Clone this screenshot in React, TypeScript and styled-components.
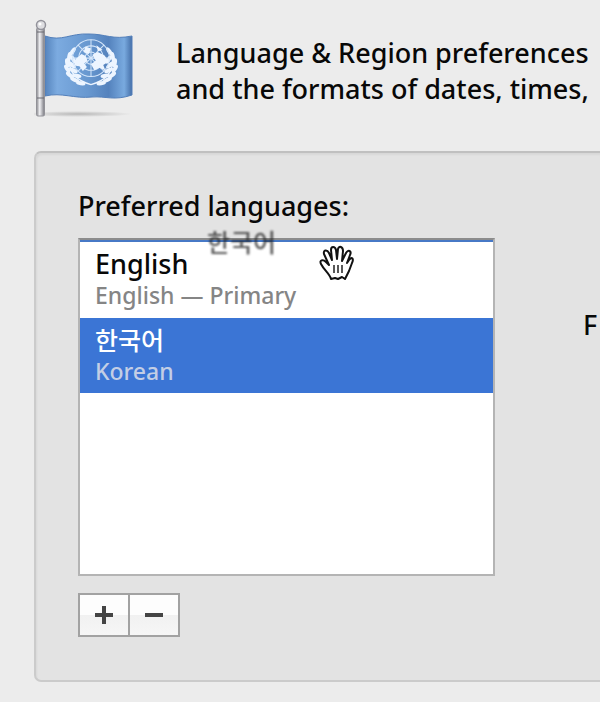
import React, { useState } from "react";
import styled, { createGlobalStyle } from "styled-components";

const GlobalStyle = createGlobalStyle`
  * { box-sizing: border-box; }
  body {
    margin: 0;
    background: #ececec;
    color: #080808;
    font-family: "Noto Sans", "Noto Sans CJK KR", sans-serif;
    font-weight: 500;
    overflow-x: hidden;
  }
`;

const Page = styled.main`
  display: flex;
  flex-direction: column;
  padding: 18px 0 20px 34px;
`;

const Header = styled.header`
  display: flex;
  gap: 38px;
  height: 133px;
`;

const FlagIcon = styled.svg`
  flex: none;
  width: 104px;
  height: 104px;
`;

const Intro = styled.p`
  margin: 0;
  padding-top: 17px;
  font-size: 27px;
  line-height: 36px;
  white-space: nowrap;
`;

const Panel = styled.section`
  display: flex;
  justify-content: space-between;
  min-height: 530px;
  padding: 35px 0 43px 42px;
  border: 2px solid #cbcbcb;
  border-top-color: #c0c0c0;
  border-right: 0;
  border-radius: 7px 0 0 7px;
  background: #e3e3e3;
  box-shadow: inset 1px 2px 2px rgba(0, 0, 0, 0.05);
`;

const LanguageColumn = styled.div`
  display: flex;
  flex-direction: column;
  flex: 0 1 417px;
`;

const Label = styled.span`
  height: 50px;
  font-size: 27px;
  line-height: 36px;
  white-space: nowrap;
`;

const ListFrame = styled.div`
  position: relative;
`;

const LanguageList = styled.ul`
  height: 338px;
  margin: 0;
  padding: 0;
  list-style: none;
  border: 2px solid #b4b4b4;
  border-top-color: #8c8c8c;
  background: #fff;
  box-shadow: inset 0 2px 0 #4779c6;
`;

const LanguageOption = styled.li<{ $selected: boolean }>`
  display: flex;
  flex-direction: column;
  height: 75px;
  padding: 6px 15px 0;
  background: ${(p) => (p.$selected ? "#3b75d5" : "transparent")};
  color: ${(p) => (p.$selected ? "#fff" : "#080808")};

  &:first-child {
    height: 78px;
    padding-top: 8px;
  }
`;

const LanguageName = styled.span<{ $korean: boolean }>`
  font-size: ${(p) => (p.$korean ? "25px" : "27px")};
  line-height: 32px;
`;

const LanguageDetail = styled.span<{ $selected: boolean }>`
  font-size: 23px;
  line-height: 30px;
  color: ${(p) => (p.$selected ? "#c3cee5" : "#858585")};
`;

const DragGhost = styled.span`
  position: absolute;
  top: -13px;
  left: 129px;
  font-size: 25px;
  line-height: 34px;
  color: #222;
  opacity: 0.75;
  filter: blur(1px);
  pointer-events: none;
`;

const HandCursor = styled.svg`
  position: absolute;
  top: 7px;
  left: 240px;
  width: 38px;
  height: 38px;
  pointer-events: none;
`;

const ButtonGroup = styled.div`
  display: flex;
  align-self: flex-start;
  margin-top: 17px;
  border: 2px solid #a2a2a2;
`;

const SquareButton = styled.button`
  display: grid;
  place-items: center;
  width: 48px;
  height: 40px;
  padding: 0;
  border: 0;
  background: linear-gradient(#fdfdfd 0 50%, #f1f1f1 50%, #f6f6f6);

  & + & {
    width: 50px;
    border-left: 2px solid #a2a2a2;
  }
`;

const SideLabel = styled.span`
  flex: none;
  width: 17px;
  margin-top: 119px;
  font-size: 27px;
  line-height: 36px;
`;

const languages = [
  { id: "en", name: "English", detail: "English — Primary" },
  { id: "ko", name: "한국어", detail: "Korean" },
];

const leaves = [
  [18, 32, 100], [15, 41, 80], [15, 50, 58], [19, 59, 38], [26, 66, 22], [35, 71, 8],
  [23, 24, 125], [24, 36, 60], [22, 44, 42], [24, 52, 25], [29, 60, 10],
];

function Wreath() {
  return (
    <>
      {leaves.map(([x, y, angle]) => (
        <ellipse key={`${x}-${y}`} cx={x} cy={y} rx="7" ry="3" transform={`rotate(${angle} ${x} ${y})`} />
      ))}
      <path d="M21 25Q13 44 26 60Q35 69 50 73" fill="none" stroke="#edf5ff" strokeWidth="2" />
    </>
  );
}

function UnFlag() {
  return (
    <FlagIcon viewBox="0 0 104 104" role="img" aria-label="United Nations flag">
      <defs>
        <linearGradient id="cloth">
          <stop offset="0" stopColor="#5584bd" />
          <stop offset=".14" stopColor="#7cabe0" />
          <stop offset=".5" stopColor="#6797cf" />
          <stop offset=".73" stopColor="#5482bd" />
          <stop offset=".91" stopColor="#79aadf" />
          <stop offset="1" stopColor="#456fa8" />
        </linearGradient>
        <linearGradient id="pole">
          <stop offset="0" stopColor="#85858a" />
          <stop offset=".4" stopColor="#f1f1f4" />
          <stop offset="1" stopColor="#77777e" />
        </linearGradient>
        <radialGradient id="shadow">
          <stop offset="0" stopColor="#8c8c8c" stopOpacity=".55" />
          <stop offset="1" stopColor="#8c8c8c" stopOpacity="0" />
        </radialGradient>
      </defs>
      <ellipse cx="44" cy="96" rx="54" ry="3" fill="url(#shadow)" />
      <path d="M11 18C28 24 36 15 55 16C72 16 78 22 98 18V77C80 83 72 78 58 79C40 81 28 74 11 78Z" fill="url(#cloth)" stroke="#527fba" />
      <g fill="#edf5ff" transform="translate(23 17) scale(.68)">
        <g><Wreath /></g>
        <g transform="translate(100 0) scale(-1 1)"><Wreath /></g>
        <g fill="none" stroke="#d3e5fa" strokeWidth="1.5">
          <circle cx="50" cy="34" r="27" />
          <circle cx="50" cy="34" r="18" />
          <circle cx="50" cy="34" r="9" />
          <path d="M50 7V61M23 34H77M31 15L69 53M69 15L31 53" />
        </g>
        <path d="M28 35L36 28L42 31L45 38L40 42L44 47L38 53L33 46L25 45ZM52 29L60 25L70 30L76 39L68 44L71 52L62 48L55 52L50 43L57 38ZM42 17L50 20L47 28L39 25ZM58 15L67 22L60 24Z" />
      </g>
      <rect x="2.5" y="10" width="8" height="88" rx="1.5" fill="url(#pole)" stroke="#929298" />
      <path d="M3 14H10M3 80H10" stroke="#686870" />
      <circle cx="7" cy="7" r="4.5" fill="#dedee1" stroke="#92929a" strokeWidth="1.5" />
      <circle cx="6" cy="6" r="1.5" fill="#fff" />
    </FlagIcon>
  );
}

function OpenHand() {
  return (
    <HandCursor viewBox="0 0 38 38" aria-hidden="true">
      <path
        d="M13 34C12 29 6 25 3 19C1 15 5 14 8 17L11 20L6 9C5 5 9 4 11 8L14 15L13 5C13 1 17 1 18 5L19 14L20 4C21 0 25 2 25 6L24 16L28 8C30 4 34 6 32 10L29 18L31 15C34 11 36 14 34 18L31 26L27 34L24 32L20 34L17 33Z"
        fill="#fff"
        stroke="#111"
        strokeWidth="2"
        strokeLinejoin="round"
      />
      <path d="M16 20V28M20 20V28M24 20V28" stroke="#222" strokeWidth="1.5" />
    </HandCursor>
  );
}

export default function App() {
  const [selected, setSelected] = useState("ko");
  return (
    <>
      <GlobalStyle />
      <Page>
        <Header>
          <UnFlag />
          <Intro>
            Language &amp; Region preferences
            <br />
            and the formats of dates, times,
          </Intro>
        </Header>
        <Panel>
          <LanguageColumn>
            <Label id="languages-label">Preferred languages:</Label>
            <ListFrame>
              <LanguageList role="listbox" aria-labelledby="languages-label" tabIndex={0}>
                {languages.map(({ id, name, detail }) => (
                  <LanguageOption
                    key={id}
                    role="option"
                    aria-selected={selected === id}
                    $selected={selected === id}
                    onClick={() => setSelected(id)}
                  >
                    <LanguageName $korean={id === "ko"} lang={id}>{name}</LanguageName>
                    <LanguageDetail $selected={selected === id}>{detail}</LanguageDetail>
                  </LanguageOption>
                ))}
              </LanguageList>
              <DragGhost lang="ko">한국어</DragGhost>
              <OpenHand />
            </ListFrame>
            <ButtonGroup>
              <SquareButton type="button" aria-label="Add language">
                <svg width="18" height="18" aria-hidden="true">
                  <path d="M9 0V18M0 9H18" stroke="#444" strokeWidth="4" />
                </svg>
              </SquareButton>
              <SquareButton type="button" aria-label="Remove language">
                <svg width="18" height="18" aria-hidden="true">
                  <path d="M0 9H18" stroke="#444" strokeWidth="4" />
                </svg>
              </SquareButton>
            </ButtonGroup>
          </LanguageColumn>
          <SideLabel>F</SideLabel>
        </Panel>
      </Page>
    </>
  );
}
